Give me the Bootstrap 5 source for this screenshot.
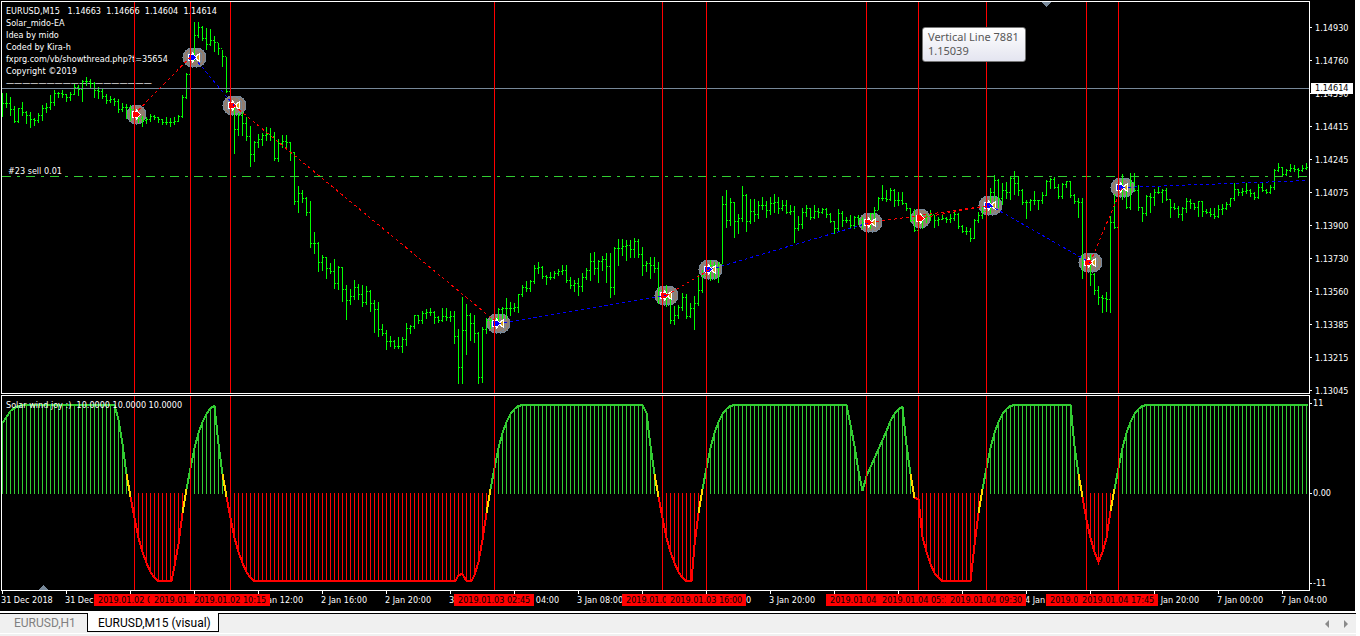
<!DOCTYPE html>
<html lang="en">
<head>
<meta charset="utf-8">
<meta name="viewport" content="width=device-width, initial-scale=1">
<title>EURUSD,M15 (visual)</title>
<link href="https://cdn.jsdelivr.net/npm/bootstrap@5.3.0/dist/css/bootstrap.min.css" rel="stylesheet">
<style>
  :root { --axis-w: 45px; }
  body { background: #f0f0f0; font-family: "DejaVu Sans Condensed", "Noto Sans", sans-serif; }
  .terminal { font-size: 9px; line-height: 12px; color: #fff; background: #000; margin-right: 5px; padding-left: 1px; }
  .desk { background: #fff; }
  .pane-main { flex: 395 1 0; }
  .pane-ind { flex: 196 1 0; }
  .plot { border: 1px solid #fff; min-width: 0; }
  .pane-main .plot { margin: 1px 0; }
  .plot svg { width: 100%; height: 100%; position: relative; }
  .comment { left: 4px; top: 3px; white-space: pre; }
  .order-tag { left: 6px; top: 163px; white-space: nowrap; font-weight: 500; }
  .scale { width: var(--axis-w); }
  .price { height: 33px; }
  .price::before, .level::before { content: ""; width: 2px; height: 1px; background: #fff; margin-right: 3px; }
  .level::before { margin-right: 1px; }
  .level:first-child { padding-top: 2px; }
  .level:last-child { padding-bottom: 2px; }
  .scale-main { padding-top: 11px; }
  .bid { left: 1px; top: 83px; width: 42px; height: 11px; line-height: 11px; padding-left: 4px; background: #fff; color: #000; }
  .times { height: 20px; }
  .hour { width: 64px; flex: none; white-space: nowrap; padding-top: 3px; }
  .hour::before { content: ""; position: absolute; left: 1px; top: 0; width: 1px; height: 3px; background: #fff; }
  .stamp { top: 3px; height: 12px; background: #f00; color: #000; white-space: nowrap; overflow: hidden; padding-left: 4px; margin-left: -40px; }
  .hint { left: 920px; top: 25px; width: 104px; height: 35px; padding: 2px 5px; font: 11px/14px "Noto Sans", sans-serif; color: #575757;
          border: 1px solid #767676; border-radius: 3px; background: linear-gradient(#fff, #e4e5f0); z-index: 2; }
  .tabstrip { height: 25px; background: #f0f0f0; border-top: 2px solid #fff; border-right: 4px solid #fff; }
  .tabrow { height: 21px; border-top: 1px solid #000; border-bottom: 1px solid #fff; flex: 1; }
  .tabrow a { font: 12px/18px Roboto, "Noto Sans", sans-serif; color: #808080; text-decoration: none; height: 18px; white-space: nowrap; padding: 0 0 0 14px; width: 87px; }
  .tabrow a.active { color: #000; background: #fff; border: 1px solid #000; border-top: 0; height: 19px; margin-top: -1px; width: 132px; padding: 1px 0 0 10px; }
  .scroller { border: 0; background: none; padding: 0; width: 19px; line-height: 0; }
</style>
</head>
<body class="vh-100 overflow-hidden">
<div class="desk d-flex flex-column h-100">
  <main class="terminal d-flex flex-column flex-grow-1">
    <section class="pane-main d-flex overflow-hidden" aria-label="Price chart">
      <div class="plot flex-grow-1 position-relative">
        <div class="comment position-absolute">EURUSD,M15   1.14663  1.14666  1.14604  1.14614
Solar_mido-EA
Idea by mido
Coded by Kira-h
fxprg.com/vb/showthread.php?t=35654
Copyright ©2019
——————————————————</div>
        <div class="order-tag position-absolute">#23 sell 0.01</div>
        <svg id="price" class="d-block" viewBox="2 2 1307 391" preserveAspectRatio="none" shape-rendering="crispEdges"></svg>
        <div class="hint position-absolute">Vertical Line 7881<br>1.15039</div>
      </div>
      <div class="scale scale-main position-relative overflow-hidden" id="prices"></div>
    </section>
    <section class="pane-ind d-flex overflow-hidden" aria-label="Solar wind joy">
      <div class="plot flex-grow-1 position-relative">
        <svg id="solar" class="d-block" viewBox="2 396 1307 194" preserveAspectRatio="none" shape-rendering="crispEdges"></svg>
        <div class="comment position-absolute">Solar wind joy :)  10.0000 10.0000 10.0000</div>
      </div>
      <div class="scale d-flex flex-column justify-content-between">
        <div class="level d-flex align-items-center">11</div>
        <div class="level d-flex align-items-center">0.00</div>
        <div class="level d-flex align-items-center">-11</div>
      </div>
    </section>
    <div class="times d-flex position-relative overflow-hidden" id="times"></div>
  </main>
  <footer class="tabstrip d-flex align-items-start">
    <nav class="tabrow d-flex" aria-label="Charts">
      <a href="#h1">EURUSD,H1</a>
      <a href="#m15" class="active" aria-current="page">EURUSD,M15 (visual)</a>
      <button class="scroller ms-auto" type="button" aria-label="Previous"><svg width="5" height="8"><path d="M4 0v8L0 4z" fill="#8a8a8a"/></svg></button>
      <button class="scroller" type="button" aria-label="Next"><svg width="5" height="8"><path d="M0 0v8l4-4z" fill="#8a8a8a"/></svg></button>
    </nav>
  </footer>
</div>
<script src="https://cdn.jsdelivr.net/npm/bootstrap@5.3.0/dist/js/bootstrap.bundle.min.js"></script>
<script>
// high, low, close for each 15-minute bar, one bar every four units
const bars = `93,116,103 93,107,103 97,115,109 106,122,121 108,122,108 102,115,112 111,123,115 112,127,119 118,125,120 113,122,115
105,120,108 103,112,107 95,109,102 90,105,93 92,97,93 90,97,94 94,101,97 92,100,94 84,94,87 85,95,89
80,101,81 77,85,81 79,87,83 82,97,90 87,98,91 88,98,96 94,103,100 96,102,99 98,105,101 99,112,109
103,111,107 104,118,107 105,120,109 107,118,112 112,122,118 116,126,120 117,123,119 114,121,116 115,119,117 117,122,119
119,124,122 117,124,122 118,126,122 117,124,121 115,121,116 95,117,97 73,98,74 55,75,60 22,60,35 22,37,27
26,40,38 28,49,44 29,45,40 36,51,42 43,54,48 50,66,56 57,92,91 92,105,103 105,153,129 113,135,115
112,135,123 117,140,136 126,166,154 141,161,142 134,147,139 133,145,135 127,140,134 128,140,136 132,160,158 139,161,143
135,147,141 135,147,142 142,160,152 152,204,201 186,212,193 190,202,198 197,215,212 201,247,243 232,253,243 242,271,262
255,270,257 257,278,268 263,273,271 259,288,283 266,289,267 267,301,289 285,319,300 289,304,296 280,299,287 284,299,294
285,306,302 286,304,291 290,311,303 300,332,309 302,336,329 324,335,333 330,349,341 336,346,341 340,348,346 337,348,346
337,352,339 323,345,328 325,333,326 315,328,315 315,323,320 311,323,313 309,318,312 308,315,312 311,323,317 316,322,320
308,321,316 308,320,317 311,321,316 311,343,336 329,383,367 297,383,330 304,354,315 313,340,323 315,342,333 332,383,377
327,382,329 318,333,320 318,328,320 315,327,318 308,322,309 307,318,308 298,318,308 302,315,308 303,311,307 294,312,294
285,296,287 281,291,288 280,291,281 265,283,268 262,273,267 266,278,276 275,284,277 272,279,277 271,278,273 269,275,271
265,274,270 265,282,280 277,288,285 280,291,283 278,295,286 273,291,277 268,279,270 253,280,261 252,274,268 260,282,261
256,270,259 253,282,266 253,297,287 247,294,248 239,265,248 239,255,246 240,260,245 240,257,249 238,257,241 239,257,254
247,275,265 261,271,263 257,278,265 257,272,268 262,303,290 285,300,293 285,306,298 295,323,320 306,324,315 305,318,307
293,310,297 294,318,316 303,317,308 296,329,303 275,305,290 270,292,275 265,272,268 260,280,265 262,279,268 262,282,264
196,263,204 190,227,220 198,225,202 202,237,221 214,233,218 186,221,195 194,231,221 199,223,211 199,221,214 201,218,205
197,209,205 201,217,210 197,214,203 194,212,202 197,213,208 200,210,205 200,213,212 205,214,211 206,242,228 216,230,224
208,228,212 205,216,208 208,219,217 205,218,211 208,217,212 208,213,209 208,217,214 213,222,221 221,233,228 209,230,213
211,226,220 217,222,220 215,228,225 216,228,217 215,224,219 217,228,222 212,228,220 213,228,213 207,221,210 197,209,198
185,200,198 190,201,199 188,200,190 189,206,200 192,205,200 192,204,203 203,210,208 208,221,220 209,231,230 220,230,222
215,228,218 214,222,216 210,220,214 215,227,220 217,225,219 215,219,218 217,222,219 214,222,218 212,220,214 213,228,226
225,232,231 227,234,231 228,241,238 219,238,220 212,222,215 207,218,211 202,214,205 188,213,192 175,200,180 179,207,198
183,204,190 182,198,192 176,199,178 171,194,183 176,195,190 189,204,202 200,218,202 199,210,200 191,204,200 200,209,200
192,203,195 180,195,181 178,188,179 177,188,187 184,198,196 183,198,184 181,187,181 181,197,195 194,203,201 198,217,202
198,278,262 250,270,262 254,285,274 273,294,290 286,304,297 295,312,298 292,311,299 216,312,222 194,228,227 190,205,190
174,199,188 185,208,207 173,209,182 173,191,190 185,210,207 207,221,213 195,215,196 193,212,197 189,205,192 186,193,192
189,202,190 188,200,199 199,217,207 203,209,208 206,217,214 207,220,208 198,212,201 199,208,203 203,209,207 201,216,201
201,216,211 209,213,212 208,216,214 208,218,216 205,217,209 204,214,208 202,209,204 198,206,198 183,200,189 189,195,192
188,195,191 183,193,190 189,196,193 192,199,197 184,198,187 182,191,190 189,193,192 185,193,187 169,189,170 163,171,167
167,175,174 169,175,170 164,171,168 165,171,169 168,177,170 165,171,168 163,169,167`.split(/\s+/).map(s => s.split(',').map(Number));

// x of the signal, price level, buy flag, whether a previous trade closes there
const signals = [[134,114,0,0,'01.02 04:15'],[190,57,1,1,'01.02 07:45'],[230,105,0,1,'01.02 10:15'],[494,323,1,1,'01.03 02:45'],
  [662,295,0,1,'01.03 13:15'],[706,269,1,1,'01.03 16:00'],[866,222,0,1,'01.04 02:00'],[918,218,0,0,'01.04 05:15'],
  [986,205,1,1,'01.04 09:30'],[1086,262,0,1,'01.04 15:45'],[1118,187,1,1,'01.04 17:45']];
const trades = [[134,114,190,57,0],[194,57,234,105,1],[234,105,498,323,0],[498,323,666,295,1],[666,295,710,269,0],[710,269,870,222,1],
  [870,222,990,205,0],[918,218,990,205,0],[990,205,1090,262,1],[1090,262,1122,187,0],[1122,187,1308,180,1]];
const vlines = (a, b) => `<path d="${signals.map(s => `M${s[0]} ${a}V${b}`).join('')}" stroke="#f00" fill="none"/>`;

let d = '', prev = bars[0][2];
bars.forEach(([h, l, c], i) => {
  const x = 2 + 4 * i;
  d += `M${x + .5} ${h}V${l + 1}M${x - 1} ${prev + .5}H${x}M${x + 1} ${c + .5}H${x + 2}`;
  prev = c;
});
let g = '';
signals.forEach(([x, y, , closed]) => {
  g += `<g fill="#917d6f" stroke="#778899"><circle cx="${x + 2.5}" cy="${y + .5}" r="9.5"/>${closed ? `<circle cx="${x + 6.5}" cy="${y + .5}" r="9.5"/><circle cx="${x + 2.5}" cy="${y + .5}" r="9.5" fill="none"/>` : ''}</g>`;
});
g += `<path d="${d}" stroke="#0f0" fill="none"/>`;
g += '<path d="M2 88.5H1309" stroke="#778899"/><path d="M2 176.5H1309" stroke="#32cd32" stroke-dasharray="9 6 3 6"/>';
signals.forEach(([x, y, buy, closed]) => {
  g += `<g transform="translate(${x} ${y})" stroke="#fff">${closed ? '<path d="M9.500-3.500V4.500L4.500.5z" fill="#daa520"/>' : ''}<path d="M-1.500-2.500H2.500V-4L6.500.5 2.500 5V3.500H-1.500z" fill="${buy ? '#00f' : '#f00'}"/></g>`;
});
trades.forEach(t => { g += `<path d="M${t[0]} ${t[1] + .5}L${t[2]} ${t[3] + .5}" stroke="${t[4] ? '#00f' : '#f00'}" stroke-dasharray="3 3"/>`; });
g += `<g transform="translate(.5 0)">${vlines(2, 393)}</g><path d="M1042 2h9l-4.500 5z" fill="#778899"/>`;
document.getElementById('price').innerHTML = g;

// indicator curve: a run of points per colour
const G = '#32cd32', Y = '#ffd700', R = '#f00';
const rise = x => [[x,489],[x+4,468],[x+8,448],[x+12,433],[x+16,422],[x+20,414],[x+24,409],[x+28,406],[x+32,405]];
const fall = x => [[x,497],[x+4,518],[x+8,538],[x+12,552],[x+16,563],[x+20,572],[x+24,578],[x+28,581]];
const runs = [
 [G,[[2,423],[6,417],[10,411],[14,408],[18,406],[22,405],[114,405],[118,420],[122,444],[126,474]]],
 [Y,[[126,474],[130,497]]],
 [R,[...fall(130),[171,581],[174,566],[178,544],[182,513]]], [Y,[[182,513],[186,489]]],
 [G,[[186,489],[190,468],[194,448],[198,433],[202,422],[206,414],[210,408],[214,406],[218,444],[222,474]]], [Y,[[222,474],[226,497]]],
 [R,[...fall(226),[455,581],[458,575],[462,574],[466,581],[471,581],[474,575],[478,562],[482,540],[486,513]]], [Y,[[486,513],[490,489]]],
 [G,[...rise(490),[642,405],[646,413],[650,446],[654,474]]], [Y,[[654,474],[658,497]]],
 [R,[...fall(658),[691,581],[694,545],[698,513]]], [Y,[[698,513],[702,489]]],
 [G,[...rise(702),[846,405],[850,425],[854,446],[858,471],[862,491],[866,476],[886,431],[890,421],[894,414],[898,409],[902,407],[906,445],[910,474]]],
 [Y,[[910,474],[914,498]]],
 [R,[[914,498],[918,499],[922,537],[926,552],[930,564],[934,573],[938,578],[942,581],[970,581],[974,545],[978,513]]], [Y,[[978,513],[982,489]]],
 [G,[...rise(982),[1070,405],[1074,446],[1078,474]]], [Y,[[1078,474],[1082,497]]],
 [R,[[1082,497],[1086,520],[1090,538],[1094,552],[1098,562],[1102,552],[1106,538],[1110,511]]], [Y,[[1110,511],[1114,489]]],
 [G,[...rise(1114),[1307,405]]]];
let s = '', up = '', down = '';
runs.forEach(([col, p]) => {
  for (let x = 2; x < 1309; x += 4) for (let i = 1; i < p.length; i++) {
    const [a, b] = [p[i - 1], p[i]];
    if (x < a[0] || x >= b[0] && !(i === p.length - 1 && x === b[0])) continue;
    const y = a[1] + (b[1] - a[1]) * (x - a[0]) / (b[0] - a[0]);
    if (y < 485) up += `M${x} ${y}V494`; else if (y > 501) down += `M${x} 493V${y}`;
  }
  s += `<polyline points="${p.map(q => `${q[0]},${q[1]}`).join(' ')}" fill="none" stroke="${col}" stroke-width="2"/>`;
});
document.getElementById('solar').innerHTML = `<g transform="translate(.5 0)"><path d="${up}" stroke="${G}"/><path d="${down}" stroke="${R}"/>${s}${vlines(396, 590)}</g><path d="M39 590h9l-4.500-5z" fill="#778899"/>`;

document.getElementById('prices').innerHTML = ['1.14930','1.14760','1.14590','1.14415','1.14245','1.14075','1.13900','1.13730','1.13560','1.13385','1.13215','1.13045']
  .map(p => `<div class="price d-flex align-items-center">${p}</div>`).join('') + '<div class="bid position-absolute">1.14614</div>';
document.getElementById('times').innerHTML = ['31 Dec 2018','31 Dec 20:00','2 Jan 04:00','2 Jan 08:00','2 Jan 12:00','2 Jan 16:00','2 Jan 20:00','3 Jan 00:00','3 Jan 04:00','3 Jan 08:00','3 Jan 12:00','3 Jan 16:00','3 Jan 20:00','4 Jan 00:00','4 Jan 04:00','4 Jan 08:00','4 Jan 12:00','4 Jan 16:00','4 Jan 20:00','7 Jan 00:00','7 Jan 04:00']
  .map(t => `<div class="hour position-relative">${t}</div>`).join('') +
  signals.map((q, i) => `<div class="stamp position-absolute" style="width:${Math.min(80, (signals[i + 1] || [9999])[0] - q[0])}px;left:calc((100% - 47px) * ${((q[0] - 2) / 1307).toFixed(5)} + 1px)">2019.${q[4]}</div>`).join('');
</script>
</body>
</html>
